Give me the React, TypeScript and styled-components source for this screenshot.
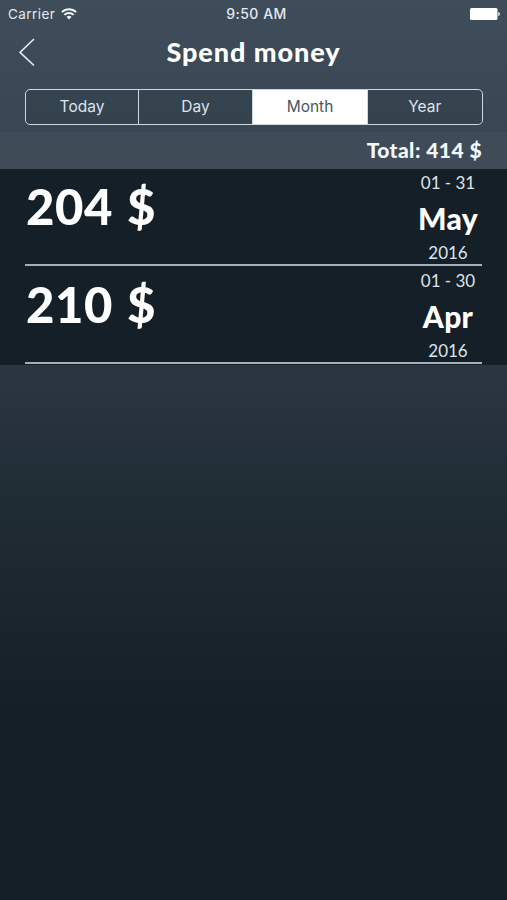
import React from 'react';
import styled, { createGlobalStyle } from 'styled-components';

const GlobalStyle = createGlobalStyle`
  * { box-sizing: border-box; }
  body { margin: 0; background: #151f28; }
`;

const Screen = styled.main`
  width: 507px;
  height: 900px;
  overflow: hidden;
  display: flex;
  flex-direction: column;
  color: #fff;
  font-family: Lato, sans-serif;
  background: linear-gradient(180deg, #3f4c59 0, #394653 130px, #2b3641 365px, #202c34 510px, #18222b 660px, #151f28 720px, #151f28 100%);
`;

const StatusBar = styled.header`
  height: 28px;
  padding: 0 7px 0 8px;
  display: grid;
  grid-template-columns: 1fr auto 1fr;
  align-items: center;
  font: 400 13.5px/28px Inter, sans-serif;
  color: #e3eaf0;
`;

const Carrier = styled.div`
  display: flex;
  align-items: center;
  gap: 6px;
  letter-spacing: 0.45px;
`;

const Clock = styled.time`
  font-size: 14px;
  font-weight: 500;
  letter-spacing: 0.5px;
  margin-left: 5px;
`;

const BatterySlot = styled.div`
  display: flex;
  justify-content: flex-end;
  padding-bottom: 1px;
`;

const NavBar = styled.nav`
  height: 61px;
  padding: 0 19px;
  display: grid;
  grid-template-columns: 40px 1fr 40px;
`;

const BackButton = styled.button`
  border: 0;
  padding: 10px 0 0;
  background: none;
  display: flex;
  align-items: flex-start;
`;

const Title = styled.h1`
  margin: 0;
  text-align: center;
  font-size: 27px;
  line-height: 48px;
  font-weight: 900;
  letter-spacing: 0.95px;
`;

const Segments = styled.div`
  height: 36px;
  margin: 0 24.5px 7px 25px;
  flex: none;
  display: grid;
  grid-template-columns: 113px 114px 115px 1fr;
  border: 1.5px solid #cbd8e2;
  border-radius: 5px;
  overflow: hidden;
`;

const Segment = styled.button<{ $active?: boolean }>`
  border: 0;
  border-right: 1px solid #cbd8e2;
  padding: 0;
  background: ${({ $active }) => ($active ? '#fff' : 'rgba(30, 42, 52, 0.14)')};
  color: ${({ $active }) => ($active ? '#4b5560' : '#dce5ed')};
  font: 400 15.5px/34px Inter, sans-serif;
  &:last-child { border-right: 0; }
`;

const TotalBar = styled.div`
  height: 37px;
  flex: none;
  padding-right: 25px;
  background: #3f4b57;
  text-align: right;
  font-size: 21px;
  line-height: 36px;
  font-weight: 900;
  letter-spacing: 0.42px;
  color: #f3f8fd;
`;

const List = styled.section`
  height: 196px;
  flex: none;
  padding: 0 25px 1px;
  background: #151f28;
`;

const Row = styled.article`
  height: 98px;
  display: flex;
  justify-content: space-between;
  border-bottom: 2px solid #a4afb7;
  &:first-child { height: 97px; }
  & + & { padding-top: 1px; }
`;

const Amount = styled.div`
  font-size: 49px;
  line-height: 60px;
  padding: 7px 0 0 1px;
  font-weight: 900;
  letter-spacing: 0.6px;
  word-spacing: 1.6px;
  white-space: pre;
`;

const Period = styled.div`
  width: 68px;
  display: flex;
  flex-direction: column;
  align-items: center;
`;

const Detail = styled.span`
  font-size: 17px;
  line-height: 28px;
  color: #dce5ec;
  white-space: nowrap;
`;

const Month = styled.strong`
  font-size: 30px;
  line-height: 42px;
  font-weight: 900;
  letter-spacing: 0.3px;
`;

const periods = [
  { amount: '204 $', days: '01 - 31', month: 'May', year: '2016' },
  { amount: '210 $', days: '01 - 30', month: 'Apr', year: '2016' },
];

const WifiIcon = () => (
  <svg width="16" height="12" viewBox="0 0 16 12" fill="none" stroke="#f0f5f8" strokeWidth="1.9">
    <path d="M.9 4.1a10.2 10.2 0 0 1 14.2 0M3.3 6.9a6.7 6.7 0 0 1 9.4 0" />
    <path d="M5.5 9a3.6 3.6 0 0 1 5 0L8 11.6Z" fill="#f0f5f8" stroke="none" />
  </svg>
);

const BatteryIcon = () => (
  <svg width="30" height="12" viewBox="0 0 30 12" fill="#fff">
    <rect width="27.5" height="12" rx="1.5" />
    <path d="M28.3 4c2 0 2 4 0 4Z" />
  </svg>
);

export default function App() {
  return (
    <Screen>
      <GlobalStyle />
      <StatusBar>
        <Carrier>Carrier <WifiIcon /></Carrier>
        <Clock>9:50 AM</Clock>
        <BatterySlot><BatteryIcon /></BatterySlot>
      </StatusBar>
      <NavBar>
        <BackButton aria-label="Back">
          <svg width="16" height="29" viewBox="0 0 16 29" fill="none" stroke="#e5edf3" strokeWidth="1.6">
            <path d="M15 1 1 14.3 15 27.5" />
          </svg>
        </BackButton>
        <Title>Spend money</Title>
      </NavBar>
      <Segments>
        {['Today', 'Day', 'Month', 'Year'].map((label) => (
          <Segment key={label} $active={label === 'Month'}>{label}</Segment>
        ))}
      </Segments>
      <TotalBar>Total: 414 $</TotalBar>
      <List>
        {periods.map((p) => (
          <Row key={p.month}>
            <Amount>{p.amount}</Amount>
            <Period>
              <Detail>{p.days}</Detail>
              <Month>{p.month}</Month>
              <Detail>{p.year}</Detail>
            </Period>
          </Row>
        ))}
      </List>
    </Screen>
  );
}
